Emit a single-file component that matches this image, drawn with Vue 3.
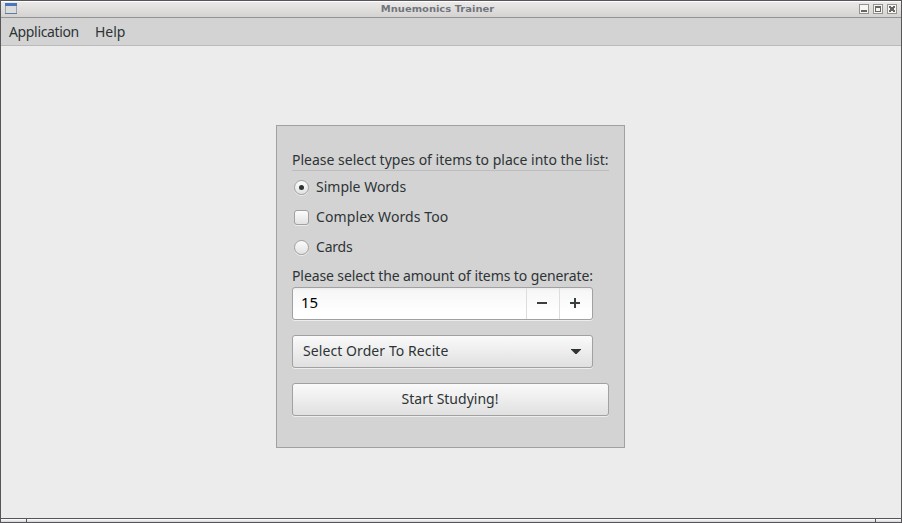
<script setup>
import { ref } from 'vue'

const itemType = ref('words')
const complexWords = ref(false)
const amount = ref(15)
</script>

<template>
  <div class="window">
    <header class="titlebar">
      <svg class="app-icon" width="12" height="11" viewBox="0 0 12 11" shape-rendering="crispEdges">
        <rect width="12" height="11" fill="#9aa3b3" />
        <rect x="1" y="3" width="10" height="7" fill="#dcdcda" />
        <rect width="12" height="3" fill="#4777bd" />
        <rect y="10" width="12" height="1" fill="#5f7aa3" />
      </svg>
      <h1 class="title">Mnuemonics Trainer</h1>
      <div class="controls">
        <svg width="10" height="10" viewBox="0 0 10 10" shape-rendering="crispEdges">
          <rect x=".5" y=".5" width="9" height="9" fill="#f7f6f5" stroke="#96928e" />
          <rect x="2" y="6" width="6" height="2" fill="#666" />
        </svg>
        <svg width="10" height="10" viewBox="0 0 10 10" shape-rendering="crispEdges">
          <rect x=".5" y=".5" width="9" height="9" fill="#f7f6f5" stroke="#96928e" />
          <path d="M2 2h6v6H2zM3 4v3h4V4z" fill="#666" fill-rule="evenodd" />
        </svg>
        <svg width="10" height="10" viewBox="0 0 10 10" shape-rendering="crispEdges">
          <rect x=".5" y=".5" width="9" height="9" fill="#f7f6f5" stroke="#96928e" />
          <path d="M2 2h2v1h2V2h2v2H7v2h1v2H6V7H4v1H2V6h1V4H2z" fill="#666" />
        </svg>
      </div>
    </header>
    <nav class="menubar">
      <span class="menu-application">Application</span>
      <span>Help</span>
    </nav>
    <main class="content">
      <section class="panel">
        <div class="heading">Please select types of items to place into the list:</div>
        <label class="option" @click="itemType = 'words'">
          <span class="mark round" :class="{ on: itemType === 'words' }"></span>
          <span>Simple Words</span>
        </label>
        <label class="option" @click="complexWords = !complexWords">
          <span class="mark" :class="{ on: complexWords }"></span>
          <span class="t-complex">Complex Words Too</span>
        </label>
        <label class="option" @click="itemType = 'cards'">
          <span class="mark round" :class="{ on: itemType === 'cards' }"></span>
          <span class="t-cards">Cards</span>
        </label>
        <div class="amount-label">Please select the amount of items to generate:</div>
        <div class="spin">
          <span class="value">{{ amount }}</span>
          <span class="step" @click="amount--">
            <svg width="12" height="12" viewBox="0 0 12 12" shape-rendering="crispEdges"><path d="M1 5h10v2H1z" fill="#3a4042" /></svg>
          </span>
          <span class="step" @click="amount++">
            <svg width="12" height="12" viewBox="0 0 12 12" shape-rendering="crispEdges"><path d="M1 5h4V1h2v4h4v2H7v4H5V7H1z" fill="#3a4042" /></svg>
          </span>
        </div>
        <div class="combo">
          <span class="t-order">Select Order To Recite</span>
          <svg width="10" height="5" viewBox="0 0 10 5"><path d="M0 0h10v.6L5.6 5H4.4L0 .6z" fill="#2e3436" /></svg>
        </div>
        <div class="start">Start Studying!</div>
      </section>
    </main>
    <footer class="grip"><i></i><i></i><i></i></footer>
  </div>
</template>

<style>
body {
  margin: 0;
  overflow: hidden;
}
</style>

<style scoped>
.window {
  box-sizing: border-box;
  width: 902px;
  height: 523px;
  border: 1px solid #55555a;
  display: flex;
  flex-direction: column;
  background: #ececec;
  color: #2e3436;
  font: 14px/20px "Noto Sans", "Open Sans", sans-serif;
  white-space: nowrap;
}
.titlebar {
  box-sizing: border-box;
  height: 17px;
  display: grid;
  grid-template-columns: 33px 1fr 60px;
  border-top: 1px solid #fff;
  border-bottom: 1px solid #949494;
  background: linear-gradient(#ebe9e8, #d5d3d1);
}
.app-icon {
  margin: 1px 0 0 4px;
}
.title {
  margin: 0;
  text-align: center;
  font: bold 9.3px/13px "DejaVu Sans", sans-serif;
  transform: scaleX(1.07);
  color: #71757c;
}
.controls {
  display: flex;
  justify-content: flex-end;
  gap: 4px;
  padding: 2px 4px 0 0;
}
.menubar {
  box-sizing: border-box;
  height: 28px;
  display: flex;
  gap: 16px;
  padding: 4px 8px;
  border-bottom: 1px solid #bababa;
  background: #d3d3d3;
}
.menu-application {
  letter-spacing: -0.35px;
}
.content {
  flex: 1;
  display: flex;
  justify-content: center;
  align-items: flex-start;
  padding: 79px 1px 0 0;
}
.panel {
  box-sizing: border-box;
  width: 349px;
  height: 323px;
  padding: 24px 15px 0;
  border: 1px solid #a1a1a1;
  background: #d3d3d3;
}
.heading {
  height: 20px;
  border-bottom: 1px solid #bdbdbd;
  margin-bottom: 1px;
}
.option {
  display: flex;
  align-items: center;
  gap: 7px;
  height: 30px;
  padding-left: 2px;
}
.mark {
  box-sizing: border-box;
  width: 15px;
  height: 15px;
  border: 1px solid #a1a1a1;
  border-radius: 3px;
  background: linear-gradient(#fcfcfc, #e2e2e2);
  box-shadow: 0 1px #ececec;
  display: flex;
  align-items: center;
  justify-content: center;
}
.round {
  border-radius: 50%;
}
.on::after {
  content: "";
  width: 5px;
  height: 5px;
  border-radius: 50%;
  background: #2e3436;
}
.t-complex {
  letter-spacing: 0.1px;
}
.t-cards {
  letter-spacing: -0.2px;
}
.amount-label {
  height: 20px;
  margin: 4px 0 1px;
  letter-spacing: -0.1px;
}
.spin,
.combo,
.start {
  box-sizing: border-box;
  height: 33px;
  width: 301px;
  border: 1px solid #a1a1a1;
  border-radius: 3px;
  box-shadow: 0 1px #ededed;
  display: flex;
  align-items: center;
}
.spin {
  background: linear-gradient(#ededed, #f7f7f7 3px, #fff 80%);
  color: #000;
}
.value {
  flex: 1;
  padding: 0 0 3px 8px;
  font-size: 15px;
}
.step {
  box-sizing: border-box;
  width: 33px;
  height: 31px;
  padding: 0 2px 1px 0;
  border-left: 1px solid #ddd;
  display: flex;
  align-items: center;
  justify-content: center;
}
.combo {
  margin-top: 15px;
  padding: 0 11px 1px 10px;
  justify-content: space-between;
  background: linear-gradient(#fafafa, #e0e0e0);
}
.t-order {
  letter-spacing: 0.08px;
}
.start {
  margin-top: 15px;
  padding: 0 1px 1px 0;
  width: 317px;
  justify-content: center;
  background: linear-gradient(#fafafa, #e0e0e0);
}
.grip {
  height: 3px;
  border-top: 1px solid #55555a;
  display: grid;
  grid-template-columns: 25px 1fr 25px;
  gap: 1px;
  background: #55555a;
}
.grip i {
  background: linear-gradient(#fff, #d4d4d6);
}
</style>
